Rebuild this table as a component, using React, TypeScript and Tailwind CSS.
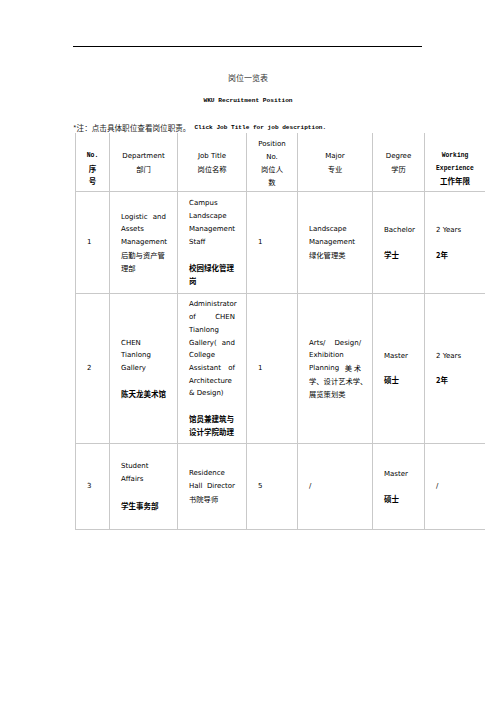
import React from "react";

const EN = "font-['DejaVu_Sans','Noto_Sans_CJK_SC',sans-serif] text-[7px]";
const ZH = "font-['Noto_Sans_CJK_SC',sans-serif] text-[7.3px]";
const ZHB = "font-['Noto_Sans_CJK_SC',sans-serif] text-[7.5px] font-bold";
const MONO = "font-['Liberation_Mono','Noto_Sans_CJK_SC',monospace]";

function L({ children, c = EN, extra = "" }: { children?: React.ReactNode; c?: string; extra?: string }) {
  return <div className={`${c} leading-[12.7px] whitespace-nowrap ${extra}`}>{children}</div>;
}

function J({ a, b, c = EN }: { a: React.ReactNode; b: React.ReactNode; c?: string }) {
  return (
    <div className={`${c} leading-[12.7px] flex justify-between whitespace-nowrap`}>
      <span>{a}</span>
      <span>{b}</span>
    </div>
  );
}

function Cell({ children, className = "" }: { children?: React.ReactNode; className?: string }) {
  return (
    <div className={`border-l border-b border-[#c9c9c9] flex flex-col ${className}`}>{children}</div>
  );
}

function BodyCell({ children }: { children?: React.ReactNode }) {
  return <Cell className="justify-center px-[11px]">{children}</Cell>;
}

export default function App() {
  return (
    <div className="w-[496px] h-[702px] bg-white text-black pt-[46px]">
      <div className="ml-[73px] w-[349px] h-px bg-black" />
      <div className="mt-[25px] text-center font-['Noto_Sans_CJK_SC',serif] text-[8px] leading-[12px] text-[#333]">
        岗位一览表
      </div>
      <div className={`mt-[12px] text-center ${MONO} text-[6.2px] font-bold leading-[10px]`}>
        WKU Recruitment Position
      </div>
      <div className="mt-[17px] ml-[73px] leading-[10px] whitespace-nowrap flex items-center">
        <span className="font-['Noto_Sans_CJK_SC',serif] text-[7.6px] text-[#222]">*注：点击具体职位查看岗位职责。</span>
        <span className={`${MONO} text-[6.1px] font-bold ml-[4px]`}>Click Job Title for job description.</span>
      </div>

      <div className="ml-[75px] w-[410px] grid grid-cols-[34px_68px_69px_51px_75px_52px_61px] grid-rows-[59px_102px_150px_86px]">
        {/* header */}
        <Cell className="items-center pt-[17px]">
          <L c={`${MONO} text-[6.5px] font-bold`}>No.</L>
          <L c={ZHB}>序</L>
          <L c={ZHB}>号</L>
        </Cell>
        <Cell className="items-center pt-[17px]">
          <L>Department</L>
          <L c={ZH}>部门</L>
        </Cell>
        <Cell className="items-center pt-[17px]">
          <L>Job Title</L>
          <L c={ZH}>岗位名称</L>
        </Cell>
        <Cell className="items-center pt-[5px]">
          <L>Position</L>
          <L>No.</L>
          <L c={ZH}>岗位人</L>
          <L c={ZH}>数</L>
        </Cell>
        <Cell className="items-center pt-[17px]">
          <L>Major</L>
          <L c={ZH}>专业</L>
        </Cell>
        <Cell className="items-center pt-[17px]">
          <L>Degree</L>
          <L c={ZH}>学历</L>
        </Cell>
        <Cell className="items-center pt-[17px]">
          <L c={`${MONO} text-[6.3px] font-bold`}>Working</L>
          <L c={`${MONO} text-[6.3px] font-bold`}>Experience</L>
          <L c={ZHB}>工作年限</L>
        </Cell>

        {/* row 1 */}
        <BodyCell>
          <L>1</L>
        </BodyCell>
        <BodyCell>
          <J a="Logistic" b="and" />
          <L>Assets</L>
          <L>Management</L>
          <L c={ZH}>后勤与资产管</L>
          <L c={ZH}>理部</L>
        </BodyCell>
        <BodyCell>
          <L>Campus</L>
          <L>Landscape</L>
          <L>Management</L>
          <L>Staff</L>
          <L c={ZHB} extra="mt-[14px]">校园绿化管理</L>
          <L c={ZHB}>岗</L>
        </BodyCell>
        <BodyCell>
          <L>1</L>
        </BodyCell>
        <BodyCell>
          <L>Landscape</L>
          <L>Management</L>
          <L c={ZH}>绿化管理类</L>
        </BodyCell>
        <BodyCell>
          <L>Bachelor</L>
          <L c={ZHB} extra="mt-[12px]">学士</L>
        </BodyCell>
        <BodyCell>
          <L>2 Years</L>
          <L c={ZHB} extra="mt-[12px]">2年</L>
        </BodyCell>

        {/* row 2 */}
        <BodyCell>
          <L>2</L>
        </BodyCell>
        <BodyCell>
          <L>CHEN</L>
          <L>Tianlong</L>
          <L>Gallery</L>
          <L c={ZHB} extra="mt-[13px]">陈天龙美术馆</L>
        </BodyCell>
        <BodyCell>
          <L>Administrator</L>
          <J a="of" b="CHEN" />
          <L>Tianlong</L>
          <J a="Gallery(" b="and" />
          <L>College</L>
          <J a="Assistant" b="of" />
          <L>Architecture</L>
          <L>&amp; Design)</L>
          <L c={ZHB} extra="mt-[13px]">馆员兼建筑与</L>
          <L c={ZHB}>设计学院助理</L>
        </BodyCell>
        <BodyCell>
          <L>1</L>
        </BodyCell>
        <BodyCell>
          <J a="Arts/" b="Design/" />
          <L>Exhibition</L>
          <div className="flex justify-between leading-[12.7px] whitespace-nowrap">
            <span className={EN}>Planning</span>
            <span className={ZH}>美 术</span>
          </div>
          <L c={ZH}>学、设计艺术学、</L>
          <L c={ZH}>展览策划类</L>
        </BodyCell>
        <BodyCell>
          <L>Master</L>
          <L c={ZHB} extra="mt-[11px]">硕士</L>
        </BodyCell>
        <BodyCell>
          <L>2 Years</L>
          <L c={ZHB} extra="mt-[11px]">2年</L>
        </BodyCell>

        {/* row 3 */}
        <BodyCell>
          <L>3</L>
        </BodyCell>
        <BodyCell>
          <L>Student</L>
          <L>Affairs</L>
          <L c={ZHB} extra="mt-[14px]">学生事务部</L>
        </BodyCell>
        <BodyCell>
          <L>Residence</L>
          <J a="Hall" b="Director" />
          <L c={ZH}>书院导师</L>
        </BodyCell>
        <BodyCell>
          <L>5</L>
        </BodyCell>
        <BodyCell>
          <L>/</L>
        </BodyCell>
        <BodyCell>
          <L>Master</L>
          <L c={ZHB} extra="mt-[12px]">硕士</L>
        </BodyCell>
        <BodyCell>
          <L>/</L>
        </BodyCell>
      </div>
    </div>
  );
}
